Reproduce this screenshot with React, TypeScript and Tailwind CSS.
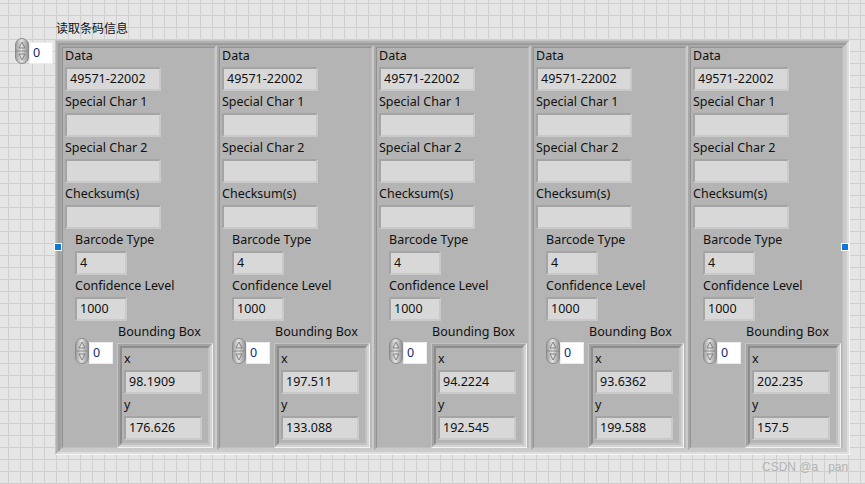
import React from 'react';

interface BoxItem {
  x: string;
  y: string;
}

const boxes: BoxItem[] = [
  { x: '98.1909', y: '176.626' },
  { x: '197.511', y: '133.088' },
  { x: '94.2224', y: '192.545' },
  { x: '93.6362', y: '199.588' },
  { x: '202.235', y: '157.5' },
];

const Spinner: React.FC = () => (
  <svg width="14" height="26" viewBox="0 0 14 26" className="block shrink-0">
    <defs>
      <linearGradient id="spinGrad" x1="0" y1="0" x2="1" y2="0">
        <stop offset="0" stopColor="#9a9a9a" />
        <stop offset="0.45" stopColor="#e4e4e4" />
        <stop offset="1" stopColor="#8e8e8e" />
      </linearGradient>
    </defs>
    <rect x="0.5" y="0.5" width="13" height="25" rx="6.5" fill="url(#spinGrad)" stroke="#8a8a8a" />
    <line x1="1" y1="13" x2="13" y2="13" stroke="#8a8a8a" />
    <path d="M7 4 L4 10 L10 10 Z" fill="none" stroke="#7a7a7a" strokeWidth="0.9" />
    <path d="M4 16 L10 16 L7 22 Z" fill="none" stroke="#7a7a7a" strokeWidth="0.9" />
  </svg>
);

const IndexControl: React.FC = () => (
  <div className="flex items-end">
    <Spinner />
    <div className="h-[22px] w-[24px] border border-[#ececec] bg-white pl-[3px] text-[12.5px] leading-[20px] text-[#102a72]">
      0
    </div>
  </div>
);

const Label: React.FC<{ text: string }> = ({ text }) => (
  <div className="h-[14px] whitespace-nowrap text-[12.5px] leading-[14px] text-[#111111]">{text}</div>
);

const TextBox: React.FC<{ value?: string; width: string }> = ({ value, width }) => (
  <div
    className={`mt-[4px] mb-[4px] h-[24px] ${width} border-2 border-t-[#a4a4a4] border-l-[#a4a4a4] border-r-[#c9c9c9] border-b-[#c9c9c9] bg-[#d8d8d8] pl-[3px] text-[12.5px] leading-[20px] text-[#111111]`}
  >
    {value}
  </div>
);

const Field: React.FC<{ label: string; value?: string; width: string }> = ({ label, value, width }) => (
  <div>
    <Label text={label} />
    <TextBox value={value} width={width} />
  </div>
);

// stepped frame used by LabVIEW array shells
const ArrayFrame: React.FC<{ children: React.ReactNode; className?: string }> = ({ children, className }) => (
  <div className={`border-[1px] border-t-[#c4c4c4] border-l-[#c4c4c4] border-r-[#f2f2f2] border-b-[#f2f2f2] ${className ?? ''}`}>
    <div className="h-full border-2 border-t-[#a2a2a2] border-l-[#a2a2a2] border-r-[#d4d4d4] border-b-[#d4d4d4]">
      <div className="h-full overflow-hidden border-2 border-t-[#8c8c8c] border-l-[#8c8c8c] border-r-[#c2c2c2] border-b-[#c2c2c2] bg-[#b4b4b4]">
        {children}
      </div>
    </div>
  </div>
);

const BarcodeCluster: React.FC<{ box: BoxItem }> = ({ box }) => (
  <div className="h-full w-[157px] border-2 border-t-[#a8a8a8] border-l-[#a8a8a8] border-r-[#cacaca] border-b-[#cacaca]">
    <div className="h-full border-[1px] border-t-[#929292] border-l-[#929292] border-r-[#bdbdbd] border-b-[#bdbdbd] bg-[#b4b4b4] pt-[1px] pl-[2px]">
      <Field label="Data" value="49571-22002" width="w-[96px]" />
      <Field label="Special Char 1" width="w-[96px]" />
      <Field label="Special Char 2" width="w-[96px]" />
      <Field label="Checksum(s)" width="w-[96px]" />
      <div className="pl-[10px]">
        <Field label="Barcode Type" value="4" width="w-[52px]" />
        <Field label="Confidence Level" value="1000" width="w-[52px]" />
        <div className="flex items-start">
          <div className="mt-[13px]">
            <IndexControl />
          </div>
          <div className="ml-[4px]">
            <div className="pl-[1px]">
              <Label text="Bounding Box" />
            </div>
            <ArrayFrame className="mt-[4px] h-[105px] w-[96px]">
              <div className="pt-[4px] pl-[2px]">
                <Field label="x" value={box.x} width="w-[78px]" />
                <Field label="y" value={box.y} width="w-[78px]" />
              </div>
            </ArrayFrame>
          </div>
        </div>
      </div>
    </div>
  </div>
);

const Handle: React.FC<{ side: 'left' | 'right' }> = ({ side }) => (
  <div
    className={`absolute top-[203px] h-[8px] w-[8px] border border-white bg-[#0a78d7] ${side === 'left' ? 'left-[-1px]' : 'right-[1px]'}`}
  />
);

export default function App() {
  return (
    <div className="relative h-[484px] w-[865px] overflow-hidden bg-[#e5e5e5] bg-[linear-gradient(to_right,#cecece_1px,transparent_1px),linear-gradient(to_bottom,#cecece_1px,transparent_1px)] bg-[length:12px_12px] bg-[position:8px_3px] font-['Noto_Sans','Noto_Sans_CJK_SC',sans-serif]">
      <div className="flex items-start pt-[22px] pl-[15px]">
        <div className="mt-[16px] mr-[2px]">
          <IndexControl />
        </div>
        <div>
          <div className="h-[14px] pl-[1px] text-[12px] leading-[14px] text-[#111111]">读取条码信息</div>
          <div className="relative mt-[4px]">
            <div className="h-[415px] border-[1px] border-t-[#c4c4c4] border-l-[#c4c4c4] border-r-[#f4f4f4] border-b-[#f4f4f4]">
              <div className="h-full border-2 border-t-[#b0b0b0] border-l-[#b0b0b0] border-r-[#dedede] border-b-[#dedede]">
                <div className="flex h-full border-2 border-t-[#9c9c9c] border-l-[#9c9c9c] border-r-[#cccccc] border-b-[#cccccc] bg-[#b4b4b4]">
                  {boxes.map((b, i) => (
                    <BarcodeCluster key={i} box={b} />
                  ))}
                </div>
              </div>
            </div>
            <Handle side="left" />
            <Handle side="right" />
          </div>
        </div>
      </div>
      <div className="absolute top-[458px] left-[762px] whitespace-pre font-['Liberation_Sans',sans-serif] text-[12px] leading-[18px] text-[#b4b4b4]">
        CSDN @a   pan
      </div>
    </div>
  );
}
